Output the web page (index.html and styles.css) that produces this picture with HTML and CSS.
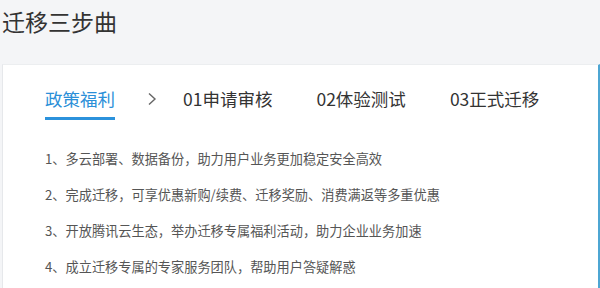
FILE: index.html
```html
<!DOCTYPE html>
<html lang="zh-CN">
<head>
	<meta charset="UTF-8">
	<title>迁移三步曲</title>
	<link rel="stylesheet" href="styles.css">
</head>
<body>
	<div class="page">
		<h2 class="title">迁移三步曲</h2>
		<div class="card">
			<div class="tabs">
				<div class="tab on">政策福利</div>
				<div class="arrow">
					<svg width="10" height="14" viewBox="0 0 10 14"><path d="M2 1.5 L8 7 L2 12.5" fill="none" stroke="#666" stroke-width="1.4"/></svg>
				</div>
				<div class="tab">01申请审核</div>
				<div class="tab">02体验测试</div>
				<div class="tab">03正式迁移</div>
			</div>
			<ul class="list">
				<li>1、多云部署、数据备份，助力用户业务更加稳定安全高效</li>
				<li>2、完成迁移，可享优惠新购/续费、迁移奖励、消费满返等多重优惠</li>
				<li>3、开放腾讯云生态，举办迁移专属福利活动，助力企业业务加速</li>
				<li>4、成立迁移专属的专家服务团队，帮助用户答疑解惑</li>
			</ul>
		</div>
	</div>
</body>
</html>
```

FILE: styles.css
```css
*{
	margin:0;
	padding:0;
}
body{
	background-color:#f4f5f7;
	font-family:"Noto Sans CJK SC","Liberation Sans",sans-serif;
	color:#333;
}
.page{
	padding:6px 0 0 2px;
}
.title{
	height:58px;
	font-size:23px;
	font-weight:normal;
	line-height:30px;
	color:#333;
}
.card{
	height:230px;
	background-color:#fff;
	border-left:1px solid #e6e8eb;
	border-top:1px solid #eceef0;
	border-right:2px solid #4ea6d3;
	padding:0 0 0 42px;
}
.tabs{
	display:flex;
	align-items:center;
	height:60px;
}
.tab{
	position:relative;
	font-size:17.5px;
	line-height:26px;
	color:#333;
	margin-right:44px;
	margin-top:8px;
}
.tab.on{
	color:#2b8fd8;
	margin-right:32px;
}
.tab.on::after{
	content:'';
	position:absolute;
	left:0;
	right:0;
	bottom:-8px;
	height:3px;
	background-color:#2b92dc;
}
.arrow{
	display:flex;
	margin:8px 26px 0 0;
}
.list{
	list-style-type:none;
	padding-top:16px;
}
.list li{
	font-size:13.2px;
	line-height:36px;
	color:#555;
}
```
